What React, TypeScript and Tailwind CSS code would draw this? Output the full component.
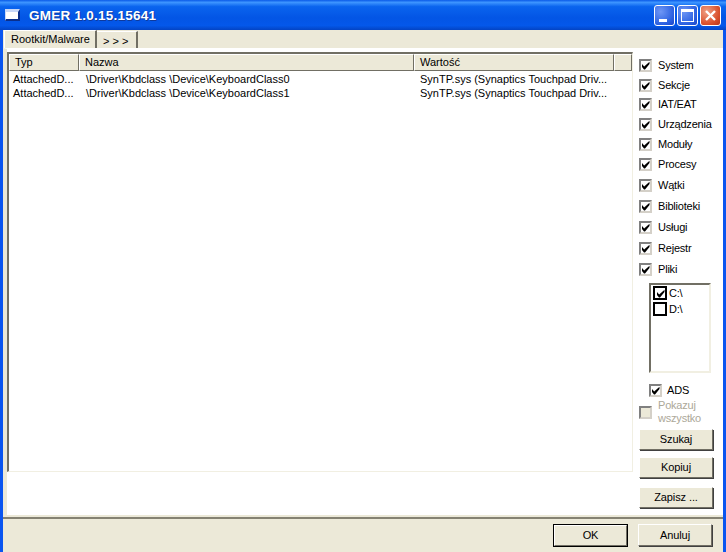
import React from "react";

const F = "[font-family:'Liberation_Sans',Arial,sans-serif]";

function Check() {
  return (
    <svg viewBox="0 0 9 9" className="w-[9px] h-[9px]">
      <path d="M1 3v3l2 2.5h1L8.5 3V.8L3.2 5.6z" fill="#000" />
    </svg>
  );
}

function CheckBox({ disabled = false, checked = true }: { disabled?: boolean; checked?: boolean }) {
  return (
    <span
      className={
        "flex items-center justify-center w-[13px] h-[13px] shrink-0 border-2 border-t-[#808080] border-l-[#808080] border-r-[#d4d0c8] border-b-[#d4d0c8] " +
        (disabled ? "bg-[#ece9d8]" : "bg-white")
      }
    >
      {checked && <Check />}
    </span>
  );
}

const rows: [string, string][] = [
  ["System", "h-[20px]"],
  ["Sekcje", "h-[20px]"],
  ["IAT/EAT", "h-[19px]"],
  ["Urządzenia", "h-[20px]"],
  ["Moduły", "h-[20px]"],
  ["Procesy", "h-[21px]"],
  ["Wątki", "h-[21px]"],
  ["Biblioteki", "h-[21px]"],
  ["Usługi", "h-[21px]"],
  ["Rejestr", "h-[21px]"],
  ["Pliki", "h-[21px]"],
];

function HeaderCell({ label, w, grow }: { label: string; w: string; grow?: boolean }) {
  return (
    <div
      className={
        w +
        " h-full pl-[5px] pb-[1px] flex items-center bg-[#ece9d8] border-t border-l border-t-white border-l-white border-r border-b border-r-[#716f64] border-b-[#716f64] " +
        (grow ? "flex-1" : "shrink-0")
      }
    >
      {label}
    </div>
  );
}

function Row({ a, b, c }: { a: string; b: string; c: string }) {
  return (
    <div className="flex h-[14px] items-center whitespace-nowrap">
      <div className="w-[70px] pl-[4px] shrink-0">{a}</div>
      <div className="w-[335px] pl-[7px] shrink-0">{b}</div>
      <div className="pl-[6px]">{c}</div>
    </div>
  );
}

function Btn({ label, className = "" }: { label: string; className?: string }) {
  return (
    <div
      className={
        "flex items-center justify-center tracking-[-0.1px] bg-[#ece9d8] border border-t-white border-l-white border-r-[#716f64] border-b-[#716f64] shadow-[1px_1px_0_#404040] " +
        className
      }
    >
      {label}
    </div>
  );
}

export default function App() {
  return (
    <div className={"w-[726px] h-[552px] flex flex-col overflow-hidden bg-[#0a55f0] text-[11px] leading-[13px] text-black " + F}>
      {/* Title bar */}
      <div className="h-[30px] shrink-0 flex items-center bg-[linear-gradient(180deg,#0a5ae8_0%,#3d95ff_8%,#0a64ee_22%,#0355e5_60%,#0458ea_85%,#0344c4_100%)]">
        <div className="ml-[5px] w-[15px] h-[12px] bg-white border-t-[3px] border-[#c8d8f8] border-l border-r-2 border-b-2 border-r-[#0a2f8c] border-b-[#0a2f8c]" />
        <div className="ml-[9px] text-white font-bold text-[13.5px] tracking-[0.25px] [text-shadow:1px_1px_0_#0f3a9c]">
          GMER 1.0.15.15641
        </div>
        <div className="ml-auto mr-[5px] flex gap-[2px]">
          <div className="w-[21px] h-[21px] rounded-[3px] border border-white bg-[radial-gradient(circle_at_30%_30%,#6f97f5,#2a5fe0_70%,#1d44c4)] relative">
            <span className="absolute left-[4px] bottom-[3px] w-[8px] h-[3px] bg-white" />
          </div>
          <div className="w-[21px] h-[21px] rounded-[3px] border border-white bg-[radial-gradient(circle_at_30%_30%,#6f97f5,#2a5fe0_70%,#1d44c4)] flex items-center justify-center">
            <span className="w-[13px] h-[13px] border border-white border-t-[3px]" />
          </div>
          <div className="w-[21px] h-[21px] rounded-[3px] border border-white bg-[radial-gradient(circle_at_30%_30%,#f0a085,#d9502c_65%,#b8351a)] flex items-center justify-center">
            <svg viewBox="0 0 13 13" className="w-[13px] h-[13px]">
              <path d="M2 2l9 9M11 2l-9 9" stroke="#fff" strokeWidth="2.4" />
            </svg>
          </div>
        </div>
      </div>

      {/* Client area */}
      <div className="flex-1 min-h-0 ml-[3px] mr-[3px] bg-[#ece9d8] flex flex-col">
        {/* Tabs */}
        <div className="h-[18px] shrink-0 flex items-end pl-[1px]">
          <div className="h-[18px] w-[93px] bg-[#ece9d8] border-t border-l border-white border-r-2 border-r-[#716f64] pl-[6px] pt-[2px] whitespace-nowrap">
            Rootkit/Malware
          </div>
          <div className="h-[17px] w-[41px] bg-[#ece9d8] border-t border-white border-r-2 border-r-[#716f64] pl-[6px] pt-[3px] whitespace-pre">
            &gt; &gt; &gt;
          </div>
        </div>

        {/* Tab page */}
        <div className="h-[469px] shrink-0 bg-white border-t border-t-white border-l-[4px] border-[#ece9d8] border-b-[2px] border-r-0 flex">
          <div className="w-[626px] shrink-0 flex flex-col">
            <div className="h-[420px] mt-[3px] border-t-2 border-l-2 border-t-[#716f64] border-l-[#716f64] border-r border-b border-r-[#f1efe2] border-b-[#f1efe2] bg-white">
              <div className="flex h-[17px]">
                <HeaderCell label="Typ" w="w-[70px]" />
                <HeaderCell label="Nazwa" w="w-[335px]" />
                <HeaderCell label="Wartość" w="w-[200px]" />
                <HeaderCell label="" w="" grow />
              </div>
              <div className="pt-[1px]">
                <Row
                  a="AttachedD..."
                  b="\Driver\Kbdclass \Device\KeyboardClass0"
                  c="SynTP.sys (Synaptics Touchpad Driv..."
                />
                <Row
                  a="AttachedD..."
                  b="\Driver\Kbdclass \Device\KeyboardClass1"
                  c="SynTP.sys (Synaptics Touchpad Driv..."
                />
              </div>
            </div>
          </div>

          {/* Right column */}
          <div className="flex-1 flex flex-col pl-[6px] pt-[6px] min-w-0 tracking-[-0.2px]">
            {rows.map(([label, h]) => (
              <div key={label} className={"flex items-center gap-[6px] " + h}>
                <CheckBox />
                <span>{label}</span>
              </div>
            ))}
            <div className="ml-[10px] mt-[3px] w-[62px] h-[90px] bg-white border-2 border-t-[#716f64] border-l-[#716f64] border-r-[#f1efe2] border-b-[#f1efe2] pl-[2px]">
              <div className="flex items-center gap-[2px] h-[16px]">
                <span className="w-[14px] h-[14px] border-2 border-black flex items-center justify-center">
                  <Check />
                </span>
                C:\
              </div>
              <div className="flex items-center gap-[2px] h-[16px]">
                <span className="w-[14px] h-[14px] border-2 border-black" />
                D:\
              </div>
            </div>
            <div className="flex items-center gap-[5px] pl-[10px] mt-[9px] h-[16px]">
              <CheckBox />
              <span>ADS</span>
            </div>
            <div className="flex items-center gap-[6px] h-[26px] mt-[1px]">
              <CheckBox disabled checked={false} />
              <span className="text-[#aca899] [text-shadow:1px_1px_0_#fff] leading-[13px]">
                Pokazuj
                <br />
                wszystko
              </span>
            </div>
            <Btn label="Szukaj" className="w-[74px] h-[21px] mt-[4px]" />
            <Btn label="Kopiuj" className="w-[74px] h-[21px] mt-[7px]" />
            <Btn label="Zapisz ..." className="w-[74px] h-[21px] mt-[9px]" />
          </div>
        </div>

        {/* Bottom */}
        <div className="flex-1 min-h-0 border-t-2 border-t-[#858272] flex items-start justify-end gap-[10px] pr-[11px] pt-[5px]">
          <div className="border border-black">
            <Btn label="OK" className="w-[73px] h-[21px] shadow-none" />
          </div>
          <Btn label="Anuluj" className="w-[74px] h-[22px]" />
        </div>
      </div>
    </div>
  );
}
